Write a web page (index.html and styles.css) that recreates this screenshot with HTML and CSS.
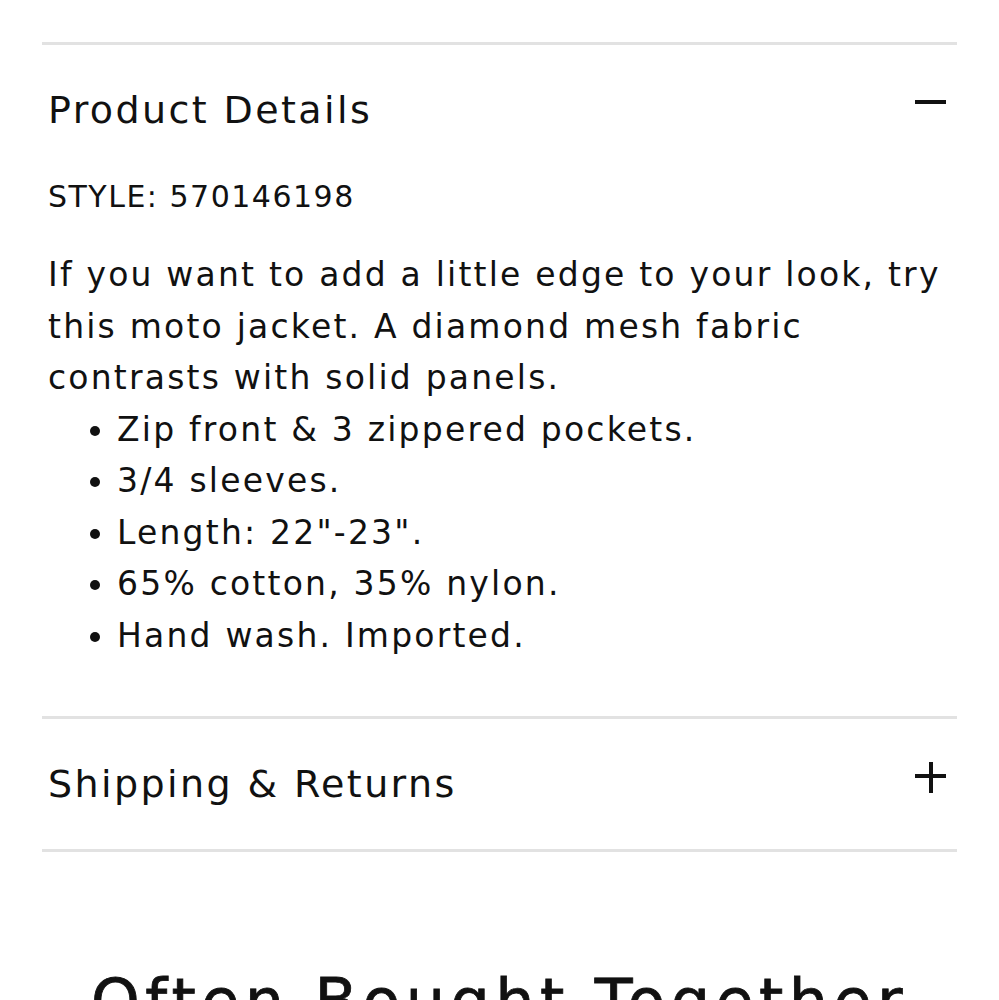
FILE: index.html
```html
<!DOCTYPE html>
<html>
<head>
    <title>Product Details</title>
    <link rel="stylesheet" href="styles.css">
</head>
<body>
    <div class="accordion">
        <div class="panel open">
            <div class="panel-head">
                <h2>Product Details</h2>
                <span class="toggle minus"></span>
            </div>
            <div class="panel-body">
                <p class="style-no">STYLE: 570146198</p>
                <p class="desc">If you want to add a little edge to your look, try this moto jacket. A diamond mesh fabric contrasts with solid panels.</p>
                <ul class="features">
                    <li>Zip front &amp; 3 zippered pockets.</li>
                    <li>3/4 sleeves.</li>
                    <li>Length: 22"-23".</li>
                    <li>65% cotton, 35% nylon.</li>
                    <li>Hand wash. Imported.</li>
                </ul>
            </div>
        </div>
        <div class="panel">
            <div class="panel-head">
                <h2>Shipping &amp; Returns</h2>
                <span class="toggle plus"></span>
            </div>
        </div>
    </div>

    <h2 class="section-title">Often Bought Together</h2>
</body>
</html>
```

FILE: styles.css
```css
body {
    font-family: "DejaVu Sans", sans-serif;
    color: #111;
    background: #fff;
    margin: 0;
    padding: 0 42px;
}
.accordion {
    padding-top: 42px;
}
.panel {
    border-top: 3px solid #e2e2e2;
}
.panel:last-child {
    border-bottom: 3px solid #e2e2e2;
}
.panel-head {
    display: flex;
    justify-content: space-between;
    align-items: flex-start;
    padding: 44px 11px 44px 6px;
}
.panel-head h2 {
    margin: 0;
    font-size: 38px;
    font-weight: normal;
    letter-spacing: 2.4px;
    line-height: 42px;
}
.toggle {
    position: relative;
    width: 31px;
    height: 31px;
    margin-top: -1px;
}
.toggle::before,
.toggle::after {
    content: "";
    position: absolute;
    background: #111;
}
.toggle::before {
    left: 0;
    right: 0;
    top: 12px;
    height: 4px;
}
.plus::after {
    top: 0;
    bottom: 0;
    left: 14px;
    width: 4px;
}
.panel-body {
    padding: 0 6px 55px;
}
.style-no {
    margin: 2px 0 32px;
    font-size: 30px;
    letter-spacing: 1.5px;
    line-height: 40px;
}
.desc {
    margin: 0;
    font-size: 33px;
    letter-spacing: 2.2px;
    line-height: 51.5px;
}
.features {
    margin: 0;
    padding-left: 69px;
    font-size: 33px;
    letter-spacing: 2.2px;
    line-height: 51.5px;
}
.section-title {
    margin: 113px 0 0;
    text-align: center;
    font-size: 62px;
    font-weight: normal;
    letter-spacing: 5.4px;
    -webkit-text-stroke: 0.8px #111;
}
```
